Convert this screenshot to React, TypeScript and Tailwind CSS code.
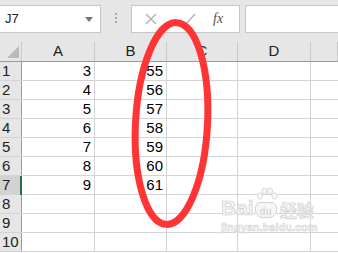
import React from "react";

const cols = ["A", "B", "C", "D", ""];
const colW = ["w-[73px]", "w-[72px]", "w-[71px]", "w-[73px]", "flex-1"];

const rows = [
  { n: 1, a: "3", b: "55" },
  { n: 2, a: "4", b: "56" },
  { n: 3, a: "5", b: "57" },
  { n: 4, a: "6", b: "58" },
  { n: 5, a: "7", b: "59" },
  { n: 6, a: "8", b: "60" },
  { n: 7, a: "9", b: "61" },
  { n: 8, a: "", b: "" },
  { n: 9, a: "", b: "" },
  { n: 10, a: "", b: "" },
];

const Toolbar = () => (
  <div className="flex h-[40px] items-start pt-[5px] bg-[#e6e6e6]">
    <div className="flex h-[28px] w-[101px] items-center justify-between border border-l-0 border-[#c6c6c6] bg-white pl-[5px] pr-[7px]">
      <span className="text-[13px] text-[#222]">J7</span>
      <span className="h-0 w-0 border-x-[4px] border-t-[5px] border-x-transparent border-t-[#777]" />
    </div>
    <div className="flex w-[30px] flex-col items-center gap-[2px] pt-[8px]">
      <span className="h-[2px] w-[2px] bg-[#a8a8a8]" />
      <span className="h-[2px] w-[2px] bg-[#a8a8a8]" />
      <span className="h-[2px] w-[2px] bg-[#a8a8a8]" />
    </div>
    <div className="flex h-[28px] w-[109px] items-center border border-[#c6c6c6] bg-white">
      <svg width="78" height="26" viewBox="0 0 78 26">
        <path d="M14 8 L24 18 M24 8 L14 18" stroke="#b4b4b4" strokeWidth="1.5" />
        <path d="M48 14 L53 19 L63 8" stroke="#b4b4b4" strokeWidth="1.5" fill="none" />
      </svg>
      <span className="ml-[3px] font-['Liberation_Serif'] text-[14px] italic leading-none text-[#555]">fx</span>
    </div>
    <div className="ml-[5px] h-[28px] flex-1 border border-r-0 border-[#c6c6c6] bg-white" />
  </div>
);

const Header = () => (
  <div className="flex h-[22px] border-b border-[#9b9b9b] bg-[#e6e6e6]">
    <div className="relative mt-[2px] w-[22px] border-r border-[#c8c8c8]">
      <span className="absolute right-[2px] bottom-[3px] h-0 w-0 border-b-[12px] border-l-[12px] border-l-transparent border-b-[#b9b9b9]" />
    </div>
    {cols.map((c, i) => (
      <div
        key={i}
        className={`${colW[i]} mt-[2px] flex items-center justify-center border-r border-[#c8c8c8] text-[15px] text-[#222]`}
      >
        {c}
      </div>
    ))}
  </div>
);

const Paw = () => (
  <svg width="24" height="18" viewBox="0 0 24 18" fill="#f6f6f6" stroke="#d2d2d2" strokeWidth="0.8">
    <ellipse cx="5" cy="9" rx="2.6" ry="3.2" />
    <ellipse cx="9.5" cy="4" rx="2.6" ry="3.2" />
    <ellipse cx="15" cy="4" rx="2.6" ry="3.2" />
    <ellipse cx="19.5" cy="9" rx="2.6" ry="3.2" />
  </svg>
);

export default function App() {
  return (
    <div className="relative h-[253px] w-[338px] overflow-hidden bg-white font-['Liberation_Sans',sans-serif]">
      <Toolbar />
      <Header />
      {rows.map((r) => (
        <div key={r.n} className="flex h-[19px] border-b border-[#d4d4d4]">
          <div
            className={`relative w-[22px] border-r border-[#9b9b9b] pl-[2px] text-[15px] leading-[18px] text-[#222] ${
              r.n === 7 ? "bg-[#d2d2d2]" : "bg-[#e6e6e6]"
            }`}
          >
            {r.n}
            {r.n === 7 && <span className="absolute right-[-1px] top-0 h-[19px] w-[2px] bg-[#217346]" />}
          </div>
          <div className="w-[73px] border-r border-[#d4d4d4] pr-[3px] text-right text-[15px] leading-[18px] text-black">
            {r.a}
          </div>
          <div className="w-[72px] border-r border-[#d4d4d4] pr-[3px] text-right text-[15px] leading-[18px] text-black">
            {r.b}
          </div>
          <div className="w-[71px] border-r border-[#d4d4d4]" />
          <div className="w-[73px] border-r border-[#d4d4d4]" />
          <div className="flex-1" />
        </div>
      ))}

      <svg className="absolute left-0 top-0" width="338" height="253" viewBox="0 0 338 253">
        <ellipse
          cx="171.5"
          cy="123.5"
          rx="36"
          ry="101"
          fill="none"
          stroke="#ff3535"
          strokeWidth="7"
          transform="rotate(3 171.5 123.5)"
        />
      </svg>

      <div className="absolute left-[221px] top-[197px] flex flex-col items-start">
        <div className="flex items-end leading-none text-[#f6f6f6]">
          <span className="text-[21px] font-bold [-webkit-text-stroke:0.7px_#cdcdcd]">Bai</span>
          <span className="relative ml-[1px] flex h-[16px] w-[22px] items-end justify-center rounded-b-[8px] rounded-t-[6px] border border-[#d2d2d2] bg-[#f6f6f6] text-[10px] font-bold text-[#d8d8d8]">
            <span className="absolute -top-[16px] left-[-1px]">
              <Paw />
            </span>
            du
          </span>
          <span className="ml-[3px] font-['Noto_Sans_CJK_SC',sans-serif] text-[17px] font-bold [-webkit-text-stroke:0.6px_#cdcdcd]">
            经验
          </span>
        </div>
        <span className="mt-[4px] text-[11px] font-bold leading-none text-[#f6f6f6] [-webkit-text-stroke:0.5px_#d0d0d0]">
          jingyan.baidu.com
        </span>
      </div>
    </div>
  );
}
